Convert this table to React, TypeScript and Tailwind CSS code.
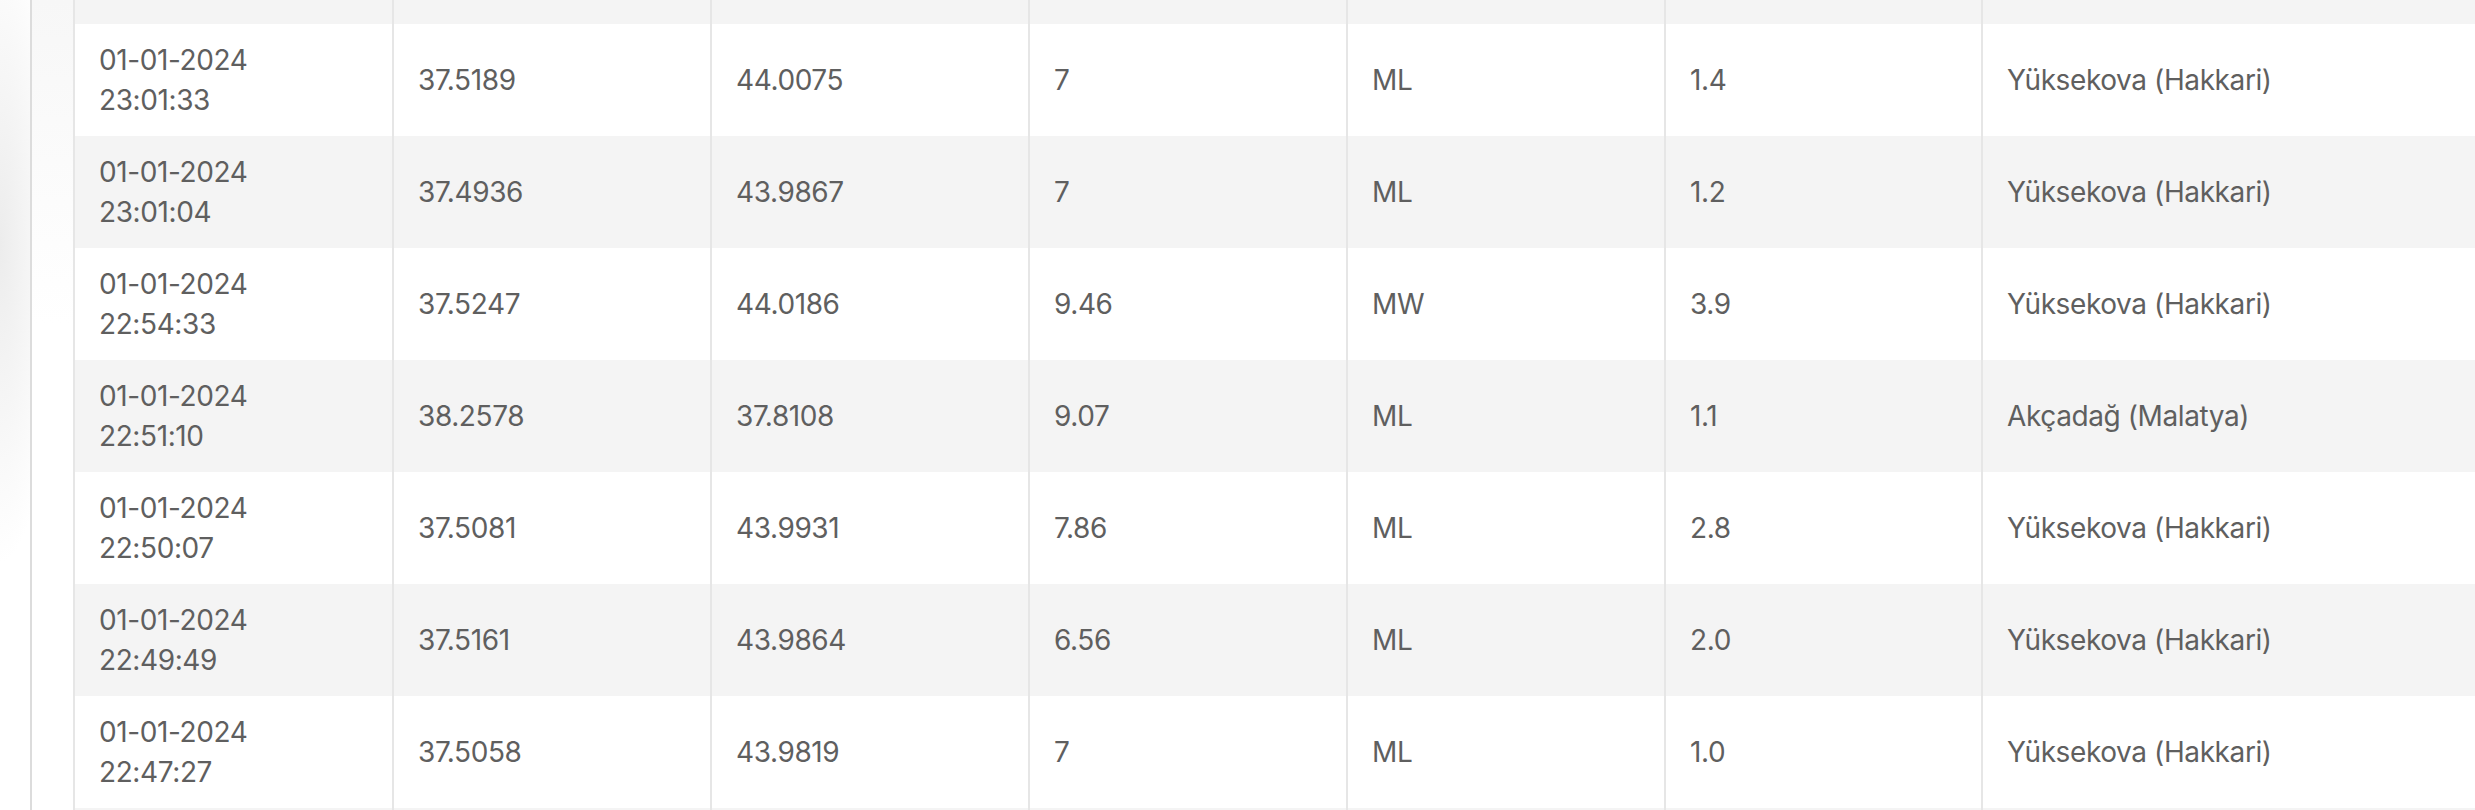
const rows = [
  ["01-01-2024", "23:01:33", "37.5189", "44.0075", "7", "ML", "1.4", "Yüksekova (Hakkari)"],
  ["01-01-2024", "23:01:04", "37.4936", "43.9867", "7", "ML", "1.2", "Yüksekova (Hakkari)"],
  ["01-01-2024", "22:54:33", "37.5247", "44.0186", "9.46", "MW", "3.9", "Yüksekova (Hakkari)"],
  ["01-01-2024", "22:51:10", "38.2578", "37.8108", "9.07", "ML", "1.1", "Akçadağ (Malatya)"],
  ["01-01-2024", "22:50:07", "37.5081", "43.9931", "7.86", "ML", "2.8", "Yüksekova (Hakkari)"],
  ["01-01-2024", "22:49:49", "37.5161", "43.9864", "6.56", "ML", "2.0", "Yüksekova (Hakkari)"],
  ["01-01-2024", "22:47:27", "37.5058", "43.9819", "7", "ML", "1.0", "Yüksekova (Hakkari)"],
];

const gridCols = "grid shrink-0 grid-cols-[319px_318px_318px_318px_318px_317px_1fr]";
const cell = "border-l-2 border-[#e6e6e6] pl-[24px] pr-4 flex items-center";

function SpacerRow({ height }: { height: string }) {
  return (
    <div className={`${gridCols} bg-[#f4f4f4] ${height}`}>
      {Array.from({ length: 7 }).map((_, i) => (
        <div key={i} className="border-l-2 border-[#e6e6e6]" />
      ))}
    </div>
  );
}

export default function App() {
  return (
    <div
      className="flex w-[2475px] h-[810px] overflow-hidden bg-white text-[28px] leading-[40px] tracking-[-0.4px] text-[#5f5f5f]"
      style={{ fontFamily: "Inter, 'Noto Sans', sans-serif" }}
    >
      {/* Window edge shadow */}
      <div className="w-[30px] shrink-0 bg-[radial-gradient(ellipse_60px_320px_at_0%_30%,#ececec,#ffffff)]" />
      <div className="w-[2px] shrink-0 bg-[#dcdcdc]" />
      <div className="w-[41px] shrink-0 bg-[linear-gradient(to_bottom,#f7f7f7,#ffffff_40%)]" />

      {/* Table */}
      <div className="flex-1 min-w-0 flex flex-col">
        <SpacerRow height="h-[24px]" />
        {rows.map((r, i) => (
          <div
            key={i}
            className={`${gridCols} h-[112px] ${i % 2 === 1 ? "bg-[#f4f4f4]" : "bg-white"}`}
          >
            <div className={`${cell} flex-col items-start justify-center`}>
              <span>{r[0]}</span>
              <span>{r[1]}</span>
            </div>
            {r.slice(2).map((v, j) => (
              <div key={j} className={cell}>
                {v}
              </div>
            ))}
          </div>
        ))}
        <SpacerRow height="h-[20px]" />
      </div>
    </div>
  );
}
